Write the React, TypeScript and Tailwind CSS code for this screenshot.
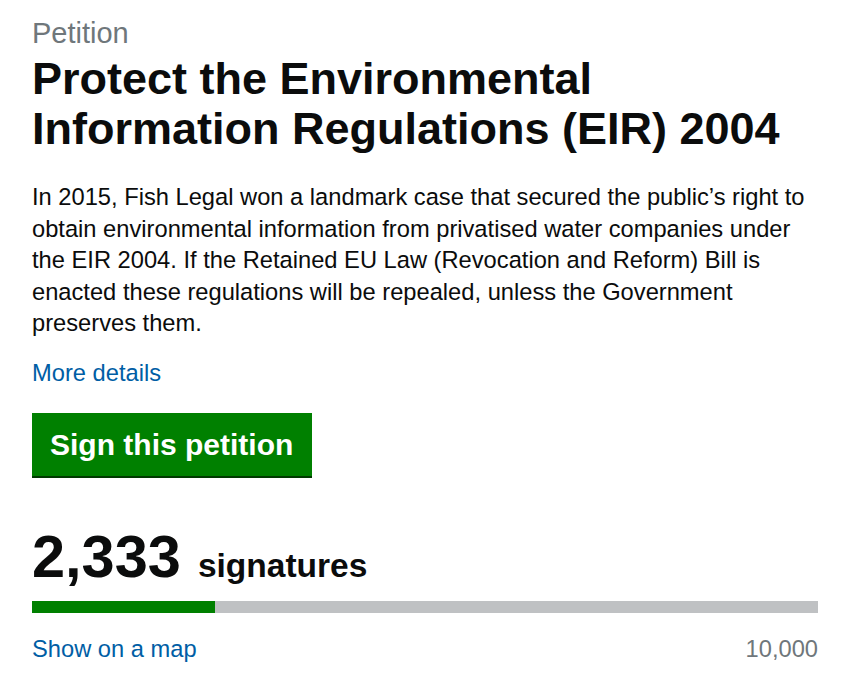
export default function App() {
  const count = 2333;
  const goal = 10000;
  const pct = (count / goal) * 100;
  return (
    <div className="w-[847px] h-[695px] bg-white text-[#0b0c0c] pl-[32px] pr-[29px] pt-[15px]" style={{ fontFamily: '"Liberation Sans", Arial, sans-serif' }}>
      <p className="text-[29px] leading-[36px] text-[#6f777b]">Petition</p>
      <h1 className="mt-[3px] text-[45px] leading-[50px] font-bold">Protect the Environmental Information Regulations (EIR) 2004</h1>
      <p className="mt-[28px] text-[23.7px] leading-[31.6px] pr-[10px]">
        In 2015, Fish Legal won a landmark case that secured the public’s right to obtain environmental information from privatised water companies under the EIR 2004. If the Retained EU Law (Revocation and Reform) Bill is enacted these regulations will be repealed, unless the Government preserves them.
      </p>
      <p className="mt-[17px] text-[23.7px] leading-[32px]">
        <a href="#" className="text-[#005ea5]">More details</a>
      </p>
      <button className="mt-[24px] block w-[280px] h-[63px] bg-[#008000] shadow-[0_2px_0_#003a00] text-white font-bold text-[30px] text-left pl-[18px]">
        Sign this petition
      </button>
      <div className="mt-[52px] flex items-baseline gap-[17px]">
        <span className="text-[59.5px] leading-[58px] font-bold">2,333</span>
        <span className="text-[33.5px] leading-[40px] font-bold">signatures</span>
      </div>
      <div className="mt-[15px] h-[12px] bg-[#bfc1c3]">
        <div className="h-full bg-[#008000]" style={{ width: `${pct}%` }} />
      </div>
      <div className="mt-[20px] flex justify-between text-[23.7px] leading-[32px]">
        <a href="#" className="text-[#005ea5]">Show on a map</a>
        <span className="text-[#6f777b]">10,000</span>
      </div>
    </div>
  );
}
